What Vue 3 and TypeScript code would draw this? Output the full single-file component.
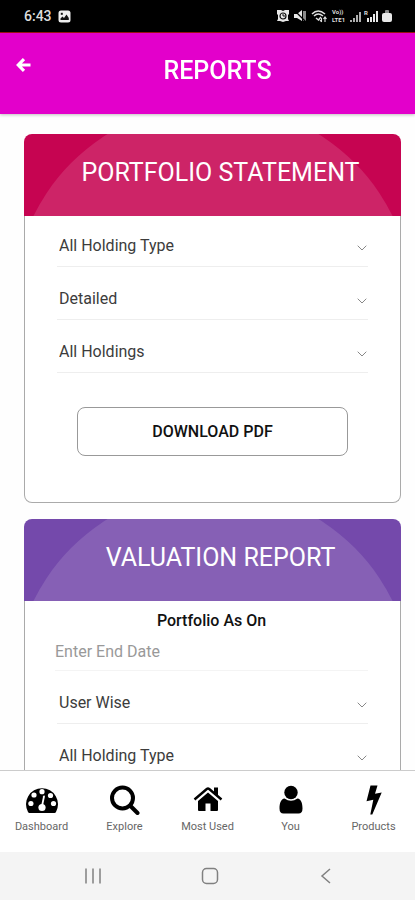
<script setup lang="ts">
import { ref } from 'vue'

interface Field {
  id: string
  label: string
  options: string[]
}

interface NavItem {
  icon: 'gauge' | 'search' | 'home' | 'user' | 'bolt'
  label: string
}

const holdingTypes = ['All Holding Type']

const statementFields: Field[] = [
  { id: 'statement-type', label: 'Holding type', options: holdingTypes },
  { id: 'statement-detail', label: 'Detail level', options: ['Detailed'] },
  { id: 'statement-holdings', label: 'Holdings', options: ['All Holdings'] },
]

const valuationFields: Field[] = [
  { id: 'valuation-group', label: 'Grouping', options: ['User Wise'] },
  { id: 'valuation-type', label: 'Holding type', options: holdingTypes },
]

const navItems: NavItem[] = [
  { icon: 'gauge', label: 'Dashboard' },
  { icon: 'search', label: 'Explore' },
  { icon: 'home', label: 'Most Used' },
  { icon: 'user', label: 'You' },
  { icon: 'bolt', label: 'Products' },
]

const endDate = ref('')
</script>

<template>
  <div class="screen">
    <div class="status">
      <div class="status-left">
        <span class="clock">6:43</span>
        <svg width="13" height="13" viewBox="0 0 13 13">
          <rect x="0.5" y="0.5" width="12" height="12" rx="2.5" fill="#eee" />
          <path d="M2.5 10V8.5L4.5 6.5L6 8L8.5 4.5L10.8 8V10Z" fill="#111" />
          <rect x="2.8" y="2.8" width="2" height="2" fill="#111" />
        </svg>
      </div>
      <svg class="status-icons" width="116" height="16" viewBox="0 -1 116 16">
        <g fill="#e8e8e8">
          <path d="M0 1L4 1L6 2L8 1H12V5L11 6V10L12 12H9L6 13L3 12H0L1 10V6L0 5Z" />
          <path d="M17 5H20L25 1V12L20 9H17Z" />
          <path d="M26 2H29V12H26Z" opacity="0.6" />
          <path d="M73 11H75V13H73ZM76 9H78V13H76ZM79 6H81V13H79ZM82 3H84V13H82Z" opacity="0.75" />
          <path d="M90 9H92V13H90ZM93 8H95V13H93ZM96 5H98V13H96ZM99 2H101V13H99Z" />
          <rect x="105" y="4" width="10" height="9" rx="2" />
          <rect x="108" y="1" width="4" height="4" rx="1" opacity="0.6" />
        </g>
        <circle cx="6" cy="7" r="3" fill="none" stroke="#111" stroke-width="1.2" />
        <path d="M6 5V7H8" fill="none" stroke="#111" />
        <path d="M17 1L29 13" stroke="#000" stroke-width="1.3" />
        <g fill="none" stroke="#e0e0e0" stroke-width="1.5">
          <path d="M35 5Q41 -1 48 5M37 7Q41 3 46 7M39 9L41.500 11L44 8" />
          <path d="M44.500 9V13M43 11L44.500 13M48 13V8M46.500 10L48 8L49.500 10" stroke-width="1.1" />
        </g>
        <text x="55" y="5" class="tiny">Vo))</text>
        <text x="55" y="13" class="tiny">LTE1</text>
        <text x="87" y="6" class="tiny">R</text>
      </svg>
    </div>

    <header class="topbar">
      <button class="back" type="button" aria-label="Back">
        <svg width="15" height="14" viewBox="0 0 15 14">
          <path d="M8 1.200L2.300 7L8 12.800M2.500 7H14.500" fill="none" stroke="#fff" stroke-width="3.200" />
        </svg>
      </button>
      <h1>REPORTS</h1>
    </header>

    <main class="content">
      <section class="card">
        <div class="banner crimson"><h2>PORTFOLIO STATEMENT</h2></div>
        <form class="fields" @submit.prevent>
          <div v-for="field in statementFields" :key="field.id" class="field">
            <select :id="field.id" :aria-label="field.label">
              <option v-for="option in field.options" :key="option">{{ option }}</option>
            </select>
            <svg class="chevron" width="10" height="6" viewBox="0 0 10 6">
              <path d="M0.700 0.700L5 5L9.300 0.700" />
            </svg>
          </div>
          <button class="download" type="submit">DOWNLOAD PDF</button>
        </form>
      </section>

      <section class="card">
        <div class="banner violet"><h2>VALUATION REPORT</h2></div>
        <form class="fields" @submit.prevent>
          <div class="date-group">
            <label class="caption" for="end-date">Portfolio As On</label>
            <input id="end-date" v-model="endDate" class="date" type="text" placeholder="Enter End Date" />
          </div>
          <div v-for="field in valuationFields" :key="field.id" class="field">
            <select :id="field.id" :aria-label="field.label">
              <option v-for="option in field.options" :key="option">{{ option }}</option>
            </select>
            <svg class="chevron" width="10" height="6" viewBox="0 0 10 6">
              <path d="M0.700 0.700L5 5L9.300 0.700" />
            </svg>
          </div>
        </form>
      </section>
    </main>

    <nav class="tabs">
      <a v-for="item in navItems" :key="item.label" href="#" class="tab">
        <svg v-if="item.icon === 'gauge'" width="32" height="30" viewBox="0 0 32 30">
          <path d="M3.500 28Q2.500 28 2 27A16 16 0 1 1 30 27Q29.500 28 28.500 28Z" />
          <g fill="#fff">
            <circle cx="8" cy="10" r="2.600" />
            <circle cx="16" cy="6.700" r="2.600" />
            <circle cx="24.500" cy="10.500" r="2.600" />
            <circle cx="4.900" cy="18.500" r="2.600" />
            <circle cx="27.500" cy="18.500" r="2.600" />
            <circle cx="16" cy="22.500" r="3.600" />
          </g>
          <path d="M16 21L18 11.500" fill="none" stroke="#fff" stroke-width="1.800" stroke-linecap="round" />
        </svg>
        <svg v-else-if="item.icon === 'search'" width="30" height="30" viewBox="0 0 30 30">
          <circle cx="12.500" cy="13" r="10.500" fill="none" stroke="#000" stroke-width="4" />
          <path d="M20 20.500L27.500 28" fill="none" stroke="#000" stroke-width="4" stroke-linecap="round" />
        </svg>
        <svg v-else-if="item.icon === 'home'" width="30" height="30" viewBox="0 0 30 30">
          <path d="M15 7.500L25 16V25Q25 26 24 26H17.500V18.500H12.500V26H6Q5 26 5 25V16Z" />
          <path d="M1.500 14.500L13.800 4Q15 3 16.200 4L28.500 14.500" fill="none" stroke="#000" stroke-width="2.400" />
          <path d="M21 2.500H25V12L21 8.500Z" />
        </svg>
        <svg v-else-if="item.icon === 'user'" width="24" height="30" viewBox="0 0 24 30">
          <circle cx="12" cy="7.500" r="6.700" />
          <path d="M5.500 13.500Q12 18 18.500 13.500C22 14 23.500 18 23.500 23.500Q23.500 28.500 19.500 28.500H4.500Q0.500 28.500 0.500 23.500C0.500 18 2 14 5.500 13.500Z" />
        </svg>
        <svg v-else width="16" height="30" viewBox="0 0 16 30">
          <path d="M4.500 0.500H11.500L9 8.700L15.700 7.500L6.300 29.500H4.300L7.300 14.700L0.500 16.200Z" />
        </svg>
        <span>{{ item.label }}</span>
      </a>
    </nav>

    <div class="system">
      <button type="button" aria-label="Recent apps">
        <svg width="18" height="18" viewBox="0 0 18 18"><path d="M2 1.500V16.500M9 1.500V16.500M16 1.500V16.500" /></svg>
      </button>
      <button type="button" aria-label="Home screen">
        <svg width="18" height="18" viewBox="0 0 18 18"><rect x="1.500" y="1.500" width="15" height="15" rx="4" /></svg>
      </button>
      <button type="button" aria-label="Go back">
        <svg width="18" height="18" viewBox="0 0 18 18"><path d="M13 2L5 9L13 16" /></svg>
      </button>
    </div>
  </div>
</template>

<style>
body {
  margin: 0;
  background: #fff;
}
</style>

<style scoped>
* {
  box-sizing: border-box;
}

.screen {
  display: flex;
  flex-direction: column;
  height: 100vh;
  font-family: Roboto, "Liberation Sans", sans-serif;
  color: #3c3c3c;
}

button,
select,
input {
  font: inherit;
  color: inherit;
  background: none;
  border: 0;
  padding: 0;
  margin: 0;
}

.status {
  flex: none;
  display: flex;
  align-items: center;
  justify-content: space-between;
  height: 33px;
  padding: 0 22px 0 24px;
  background: #000;
  border-bottom: 1px solid #a01010;
}

.status-left {
  display: flex;
  align-items: center;
  gap: 6px;
}

.clock {
  font-size: 14px;
  font-weight: 500;
  color: #ddd;
}

.tiny {
  font-size: 6px;
  font-weight: 700;
  fill: #ddd;
}

.topbar {
  flex: none;
  display: grid;
  grid-template-columns: 24px 1fr;
  height: 81px;
  padding: 22px 18px 0 14px;
  background: #e300cb;
  box-shadow: 0 1px 3px rgba(0, 0, 0, 0.25);
  z-index: 1;
}

.back {
  display: flex;
  align-self: start;
  padding: 3px 2px;
}

h1,
h2 {
  margin: 0;
  font-size: 25px;
  line-height: 32px;
  color: #fff;
  text-align: center;
}

h1 {
  font-weight: 500;
}

h2 {
  position: relative;
  font-weight: 400;
}

.content {
  flex: 1;
  min-height: 0;
  overflow-y: auto;
  scrollbar-width: none;
  display: flex;
  flex-direction: column;
  gap: 16px;
  padding: 20px 14px 16px 24px;
  background: #fefefe;
}

.card {
  flex: none;
  border-radius: 8px;
  background: #fff;
}

.banner {
  position: relative;
  overflow: hidden;
  height: 82px;
  padding: 23px 0 0 16px;
  border-radius: 8px 8px 0 0;
}

.banner::before {
  content: "";
  position: absolute;
  top: -30px;
  left: calc(50% - 200px);
  width: 400px;
  height: 400px;
  border-radius: 50%;
  background: rgba(255, 255, 255, 0.13);
}

.crimson {
  background: #c60451;
}

.violet {
  background: #7449ab;
}

.fields {
  display: flex;
  flex-direction: column;
  gap: 10px;
  padding: 8px 32px 46px;
  border: 1px solid #aaa;
  border-top: 0;
  border-radius: 0 0 8px 8px;
  font-size: 16px;
}

.field {
  display: grid;
  align-items: center;
  height: 43px;
  border-bottom: 1px solid #eee;
}

.field > * {
  grid-area: 1 / 1;
}

.field select {
  appearance: none;
  width: 100%;
  height: 42px;
  padding-left: 2px;
}

.chevron {
  justify-self: end;
  margin: 6px 1px 0 0;
  fill: none;
  stroke: #888;
  pointer-events: none;
}

.download {
  align-self: center;
  width: 87%;
  height: 49px;
  margin-top: 24px;
  border: 1px solid #999;
  border-radius: 8px;
  font-weight: 500;
  color: #111;
}

.date-group {
  display: flex;
  flex-direction: column;
  margin-left: -2px;
}

.caption {
  font-weight: 500;
  line-height: 24px;
  color: #111;
  text-align: center;
}

.date {
  width: 100%;
  height: 38px;
  border-bottom: 1px solid #f4f4f4;
}

.date::placeholder {
  color: #999;
  opacity: 1;
}

.tabs {
  flex: none;
  display: grid;
  grid-template-columns: repeat(5, 1fr);
  height: 82px;
  padding-top: 14px;
  background: #fff;
  border-top: 1px solid #ccc;
}

.tab {
  display: flex;
  flex-direction: column;
  align-items: center;
  gap: 4px;
  font-size: 11px;
  line-height: 16px;
  color: #666;
  text-decoration: none;
}

.tab svg {
  fill: #000;
}

.system {
  flex: none;
  display: flex;
  justify-content: space-between;
  height: 48px;
  padding: 0 80px 0 84px;
  background: #f4f4f4;
}

.system button {
  display: flex;
  align-items: center;
}

.system svg {
  fill: none;
  stroke: #808080;
  stroke-width: 1.5;
}
</style>
